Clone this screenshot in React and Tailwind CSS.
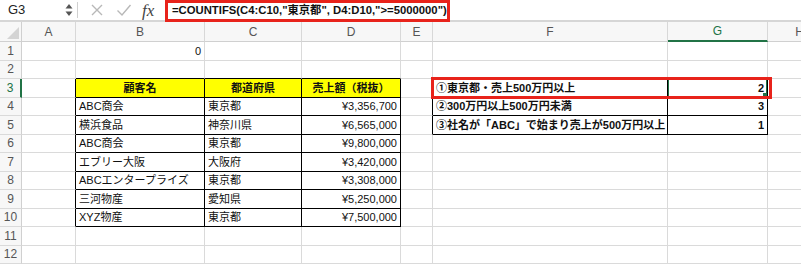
import React from 'react';

const FONT = "font-['Liberation_Sans','Noto_Sans_CJK_JP',sans-serif]";
const LETTERS = ['A', 'B', 'C', 'D', 'E', 'F', 'G', 'H'];

// cell content by row number -> column index (A=0)
const DATA = {
  1: { 1: { t: '0', align: 'right' } },
  3: {
    1: { t: '顧客名', align: 'center', bold: true, yellow: true },
    2: { t: '都道府県', align: 'center', bold: true, yellow: true },
    3: { t: '売上額（税抜）', align: 'center', bold: true, yellow: true },
    5: { t: '①東京都・売上500万円以上', bold: true },
    6: { t: '2', align: 'right', bold: true }
  },
  4: {
    1: { t: 'ABC商会' }, 2: { t: '東京都' }, 3: { t: '¥3,356,700', align: 'right' },
    5: { t: '②300万円以上500万円未満', bold: true },
    6: { t: '3', align: 'right', bold: true }
  },
  5: {
    1: { t: '横浜食品' }, 2: { t: '神奈川県' }, 3: { t: '¥6,565,000', align: 'right' },
    5: { t: '③社名が「ABC」で始まり売上が500万円以上', bold: true },
    6: { t: '1', align: 'right', bold: true }
  },
  6: { 1: { t: 'ABC商会' }, 2: { t: '東京都' }, 3: { t: '¥9,800,000', align: 'right' } },
  7: { 1: { t: 'エブリー大阪' }, 2: { t: '大阪府' }, 3: { t: '¥3,420,000', align: 'right' } },
  8: { 1: { t: 'ABCエンタープライズ' }, 2: { t: '東京都' }, 3: { t: '¥3,308,000', align: 'right' } },
  9: { 1: { t: '三河物産' }, 2: { t: '愛知県' }, 3: { t: '¥5,250,000', align: 'right' } },
  10: { 1: { t: 'XYZ物産' }, 2: { t: '東京都' }, 3: { t: '¥7,500,000', align: 'right' } }
};

const inTable = (r, c) =>
  (r >= 3 && r <= 10 && c >= 1 && c <= 3) || (r >= 3 && r <= 5 && c >= 5 && c <= 6);

const Cell = ({ r, c }) => {
  const cell = DATA[r]?.[c];
  const right = inTable(r, c) || inTable(r, c + 1) ? 'border-r-black' : 'border-r-[#dadada]';
  const bottom = inTable(r, c) || inTable(r + 1, c) ? 'border-b-black' : 'border-b-[#dadada]';
  const align =
    cell?.align === 'right' ? 'justify-end' : cell?.align === 'center' ? 'justify-center' : 'justify-start';
  const selected = r === 3 && c === 6;

  return (
    <div
      className={`relative flex items-center border-r border-b px-[3px] text-[11px] text-[#111] whitespace-nowrap overflow-hidden ${right} ${bottom} ${align} ${
        cell?.yellow ? 'bg-[#ffff00]' : 'bg-white'
      } ${cell?.bold ? 'font-bold' : ''}`}
    >
      {cell?.t}
      {selected && (
        <>
          <div className="absolute inset-0 border border-[#217346]" />
          <div className="absolute right-0 bottom-0 w-[4px] h-[4px] bg-[#217346]" />
        </>
      )}
    </div>
  );
};

const FormulaBar = () => (
  <div className="flex items-center h-[22px] border-b-2 border-[#d6d6d6] bg-white">
    <div className="w-[60px] pl-[8px] text-[13px] text-[#222]">G3</div>
    <svg width="10" height="14" viewBox="0 0 10 14" className="ml-[4px]">
      <path d="M5 1 L8.5 5.5 H1.5 Z" fill="#555" />
      <path d="M5 13 L8.5 8.5 H1.5 Z" fill="#555" />
    </svg>
    <div className="ml-[3px] w-px h-[16px] bg-[#d0d0d0]" />
    <svg width="14" height="14" viewBox="0 0 14 14" className="ml-[12px]">
      <path d="M2 2 L12 12 M12 2 L2 12" stroke="#b8b8b8" strokeWidth="1.4" />
    </svg>
    <svg width="16" height="14" viewBox="0 0 16 14" className="ml-[12px]">
      <path d="M1.5 7.5 L6 12 L14.5 2" stroke="#b8b8b8" strokeWidth="1.4" fill="none" />
    </svg>
    <div className="ml-[10px] w-[20px] text-[17px] italic text-[#444] font-['Liberation_Serif',serif] leading-none">
      fx
    </div>
    <div className="ml-[3px] mt-[1px] h-[22px] w-[285px] flex items-center border-[3px] border-[#e8231b] pl-[4px] text-[11.3px] font-bold text-[#111] whitespace-nowrap">
      =COUNTIFS(C4:C10,"東京都", D4:D10,"&gt;=5000000")
    </div>
  </div>
);

const App = () => {
  const rows = Array.from({ length: 12 }, (_, i) => i + 1);

  return (
    <div className={`w-[801px] h-[267px] overflow-hidden bg-white ${FONT}`}>
      <FormulaBar />
      <div className="relative grid grid-cols-[22px_54px_129px_97px_99px_32px_235px_100px_64px] grid-rows-[20px_repeat(12,18.5px)] w-[832px]">
        {/* corner */}
        <div className="relative border-r border-b border-[#d0d0d0] bg-[#f7f7f7]">
          <svg width="12" height="12" viewBox="0 0 12 12" className="absolute right-[2px] bottom-[2px]">
            <path d="M12 0 V12 H0 Z" fill="#d4d4d4" />
          </svg>
        </div>
        {LETTERS.map((l) => (
          <div
            key={l}
            className={`flex items-center justify-center border-r border-[#d8d8d8] bg-[#f7f7f7] text-[12px] ${
              l === 'G' ? 'border-b-2 border-b-[#217346] text-[#217346]' : 'border-b border-b-[#d0d0d0] text-[#555]'
            }`}
          >
            {l}
          </div>
        ))}
        {rows.map((r) => (
          <React.Fragment key={r}>
            <div
              className={`flex items-center justify-center border-b border-[#dadada] bg-[#f7f7f7] text-[12px] ${
                r === 3 ? 'border-r-2 border-r-[#217346] text-[#217346]' : 'border-r border-r-[#d0d0d0] text-[#555]'
              }`}
            >
              {r}
            </div>
            {LETTERS.map((_, c) => (
              <Cell key={c} r={r} c={c} />
            ))}
          </React.Fragment>
        ))}
        {/* red highlight around F3:G3 */}
        <div className="absolute left-[431px] top-[55px] w-[341px] h-[22px] border-[3px] border-[#e8231b] pointer-events-none" />
      </div>
    </div>
  );
};

export default App;
